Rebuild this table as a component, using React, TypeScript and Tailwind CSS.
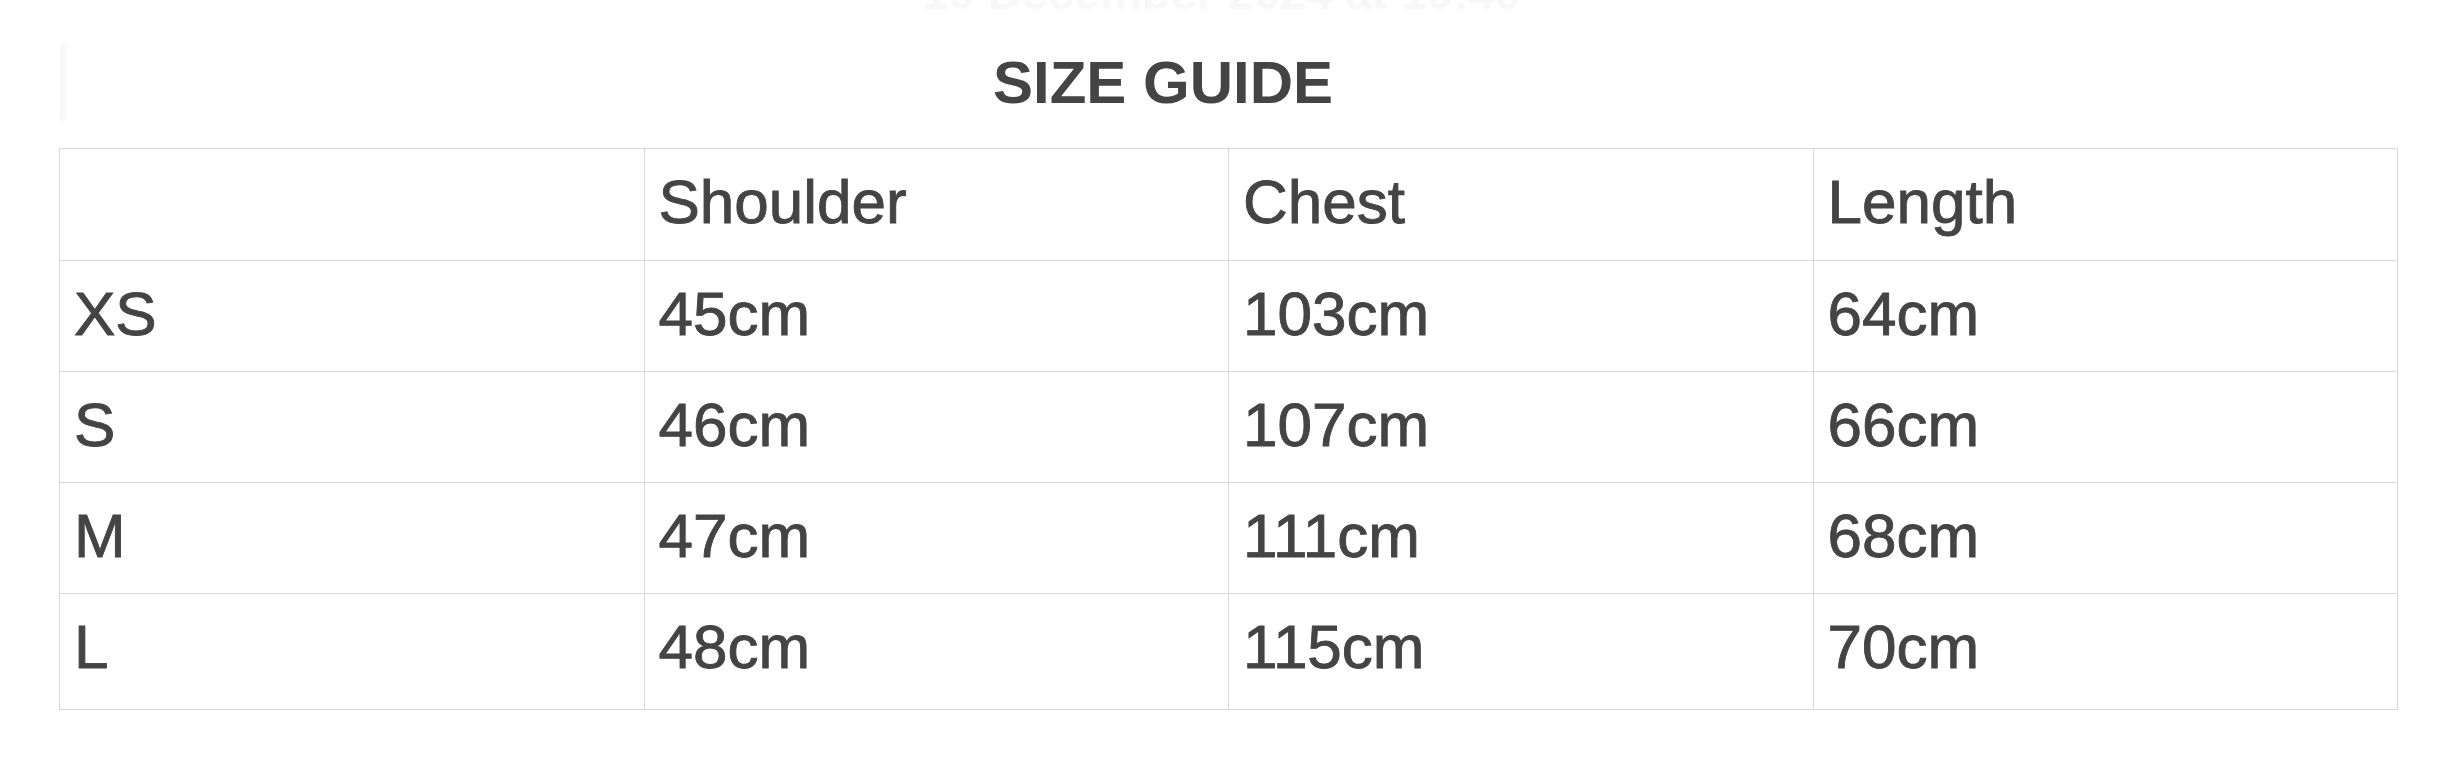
import React from 'react';

const COLUMNS = ['', 'Shoulder', 'Chest', 'Length'];

const SIZES = [
  { size: 'XS', shoulder: '45cm', chest: '103cm', length: '64cm' },
  { size: 'S', shoulder: '46cm', chest: '107cm', length: '66cm' },
  { size: 'M', shoulder: '47cm', chest: '111cm', length: '68cm' },
  { size: 'L', shoulder: '48cm', chest: '115cm', length: '70cm' },
];

const cell =
  'border border-[#d8d8d8] align-top pt-[22px] px-[14px] text-left font-normal leading-none [-webkit-text-stroke:0.9px_#444444]';

export default function App() {
  return (
    <div
      className="w-[2461px] h-[773px] overflow-hidden bg-white text-[#444444]"
      style={{ fontFamily: '"Liberation Sans", Arial, sans-serif' }}
    >
      {/* faded timestamp, mostly scrolled off */}
      <div className="mt-[-31px] pr-[18px] text-center text-[47px] leading-none font-bold text-[#f8f8f8]">
        10 December 2024 at 10:40
      </div>

      <div className="mt-[27px] flex h-[79px] items-center pl-[60px]">
        <div className="h-full w-[10px] rounded-sm bg-gradient-to-r from-[#f5f5f5] to-white" />
        <h2 className="flex-1 pr-[205px] text-center text-[60px] font-bold leading-none tracking-normal">
          SIZE GUIDE
        </h2>
      </div>

      <div className="mt-[26px] pl-[59px]">
        <table className="w-[2339px] table-fixed border-collapse text-[62px]">
          <thead>
            <tr className="h-[112px]">
              {COLUMNS.map((c, i) => (
                <th key={i} className={cell}>
                  {c}
                </th>
              ))}
            </tr>
          </thead>
          <tbody>
            {SIZES.map((row, i) => (
              <tr key={row.size} className={i === SIZES.length - 1 ? 'h-[116px]' : 'h-[111px]'}>
                <td className={cell}>{row.size}</td>
                <td className={cell}>{row.shoulder}</td>
                <td className={cell}>{row.chest}</td>
                <td className={cell}>{row.length}</td>
              </tr>
            ))}
          </tbody>
        </table>
      </div>
    </div>
  );
}
